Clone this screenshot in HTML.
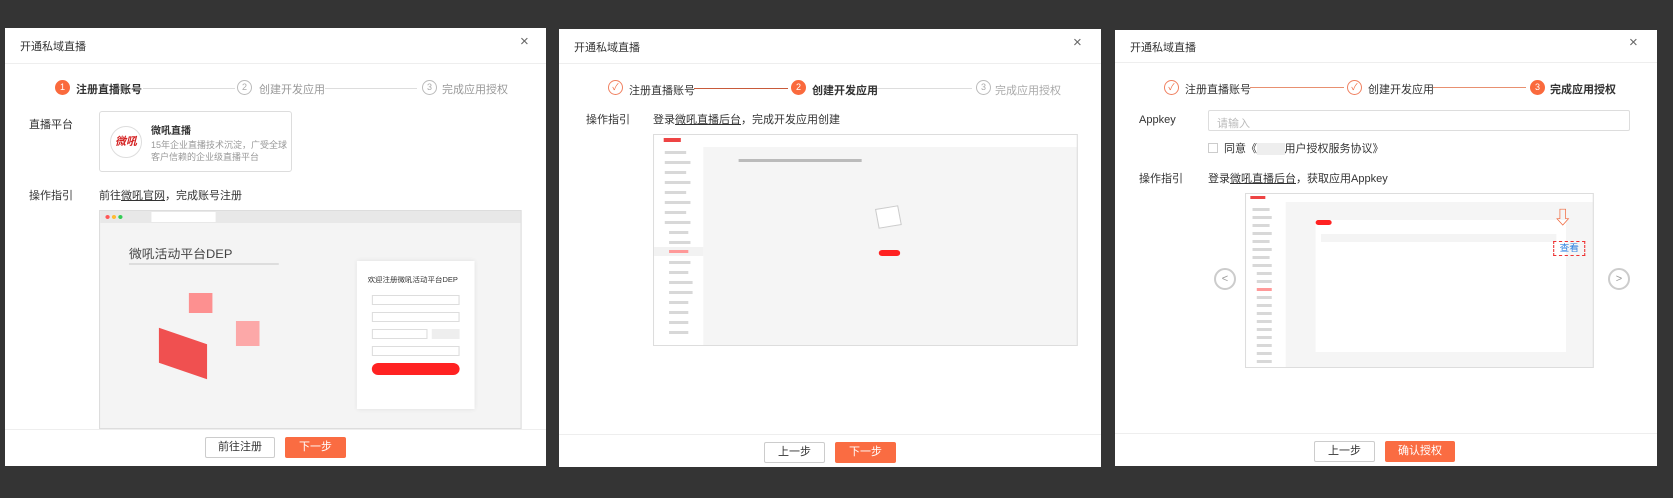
<!DOCTYPE html>
<html><head><meta charset="utf-8"><style>
*{margin:0;padding:0;box-sizing:border-box}
body{width:1673px;height:498px;background:#343434;position:relative;overflow:hidden;font-family:"Liberation Sans","Noto Sans CJK SC",sans-serif;color:#333}
.p{position:absolute;background:#fff}
.a{position:absolute}
.t{font-size:11px;white-space:nowrap}
.hl{position:absolute;left:0;right:0;height:1px;background:#eee}
.x{position:absolute;font-size:15px;color:#666}
.c{position:absolute;width:15px;height:15px;border-radius:50%;font-size:9px;text-align:center;line-height:13px}
.on{background:#fa6a3d;color:#fff;line-height:15px}
.off{border:1px solid #bbb;color:#aaa}
.ok{border:1px solid #f08060;color:#f06a40;line-height:12px}
.ln{position:absolute;height:1px}
.btn{position:absolute;height:21px;font-size:11px;text-align:center;line-height:19px;border-radius:2px}
.b1{border:1px solid #ccc;color:#333;background:#fff}
.b2{background:#fa6c42;color:#fff;line-height:21px}
.g{background:#d8d8d8;position:absolute;height:3px}
.sx{transform-origin:0 0;transform:scaleX(1.07)}
</style></head><body>

<!-- Panel 1 -->
<div class="p" style="left:5px;top:28px;width:541px;height:438px">
 <div class="a t" style="left:15px;top:10px">开通私域直播</div>
 <div class="x" style="left:515px;top:5px">×</div>
 <div class="hl" style="top:35px"></div>
 <div class="c on" style="left:50px;top:52px">1</div>
 <div class="a t" style="left:71px;top:53px;font-weight:bold">注册直播账号</div>
 <div class="ln" style="left:138px;top:60px;width:92px;background:#ddd"></div>
 <div class="c off" style="left:232px;top:52px">2</div>
 <div class="a t" style="left:254px;top:53px;color:#999">创建开发应用</div>
 <div class="ln" style="left:320px;top:60px;width:92px;background:#ddd"></div>
 <div class="c off" style="left:417px;top:52px">3</div>
 <div class="a t" style="left:437px;top:53px;color:#999">完成应用授权</div>
 <div class="a t" style="left:24px;top:88px">直播平台</div>
 <div class="a" style="left:94px;top:83px;width:193px;height:61px;border:1px solid #ddd;border-radius:3px">
  <div class="a" style="left:10px;top:14px;width:32px;height:32px;border:1px solid #ddd;border-radius:50%;color:#d42020;font-size:11px;font-weight:bold;text-align:center;line-height:30px;font-style:italic">微吼</div>
  <div class="a t" style="left:51px;top:10px;font-weight:bold;font-size:10px">微吼直播</div>
  <div class="a" style="left:51px;top:27px;font-size:9px;color:#999;line-height:12px;width:138px">15年企业直播技术沉淀，广受全球客户信赖的企业级直播平台</div>
 </div>
 <div class="a t" style="left:24px;top:159px">操作指引</div>
 <div class="a t" style="left:94px;top:159px">前往<u>微吼官网</u>，完成账号注册</div>
 <div class="a sx" style="left:94px;top:182px;width:395px;height:219px;border:1px solid #ddd;background:#f4f4f4;overflow:hidden">
  <div class="a" style="left:0;top:0;width:100%;height:12px;background:#e8e8e8"></div>
  <div class="a" style="left:5px;top:4px;width:4px;height:4px;border-radius:50%;background:#f55"></div>
  <div class="a" style="left:11px;top:4px;width:4px;height:4px;border-radius:50%;background:#fb3"></div>
  <div class="a" style="left:17px;top:4px;width:4px;height:4px;border-radius:50%;background:#3c5"></div>
  <div class="a" style="left:48px;top:1px;width:60px;height:10px;background:#fff"></div>
  <div class="a t" style="left:27px;top:34px;font-size:12px;color:#444">微吼活动平台DEP</div>
  <div class="a" style="left:27px;top:52px;width:140px;height:2px;background:#ddd"></div>
  <div class="a" style="left:55px;top:125px;width:45px;height:35px;background:#e33;opacity:.85;transform:skewY(20deg)"></div>
  <div class="a" style="left:83px;top:82px;width:22px;height:20px;background:#f77;opacity:.8"></div>
  <div class="a" style="left:127px;top:110px;width:22px;height:25px;background:#f88;opacity:.7"></div>
  <div class="a" style="left:240px;top:50px;width:110px;height:148px;background:#fff;box-shadow:0 0 4px #ddd">
   <div class="a t" style="left:10px;top:14px;font-size:7px;color:#333">欢迎注册微吼活动平台DEP</div>
   <div class="a" style="left:14px;top:34px;width:82px;height:10px;border:1px solid #ddd"></div>
   <div class="a" style="left:14px;top:51px;width:82px;height:10px;border:1px solid #ddd"></div>
   <div class="a" style="left:14px;top:68px;width:52px;height:10px;border:1px solid #ddd"></div>
   <div class="a" style="left:70px;top:68px;width:26px;height:10px;background:#eee"></div>
   <div class="a" style="left:14px;top:85px;width:82px;height:10px;border:1px solid #ddd"></div>
   <div class="a" style="left:14px;top:102px;width:82px;height:12px;border-radius:6px;background:#f22"></div>
  </div>
 </div>
 <div class="hl" style="top:401px"></div>
 <div class="btn b1" style="left:200px;top:409px;width:70px">前往注册</div>
 <div class="btn b2" style="left:280px;top:409px;width:61px">下一步</div>
</div>

<!-- Panel 2 -->
<div class="p" style="left:559px;top:29px;width:542px;height:438px">
 <div class="a t" style="left:15px;top:10px">开通私域直播</div>
 <div class="x" style="left:514px;top:5px">×</div>
 <div class="hl" style="top:34px"></div>
 <div class="c ok" style="left:49px;top:51px">✓</div>
 <div class="a t" style="left:70px;top:53px">注册直播账号</div>
 <div class="ln" style="left:135px;top:59px;width:94px;background:#c85a3a"></div>
 <div class="c on" style="left:232px;top:51px">2</div>
 <div class="a t" style="left:253px;top:53px;font-weight:bold">创建开发应用</div>
 <div class="ln" style="left:318px;top:59px;width:95px;background:#ddd"></div>
 <div class="c off" style="left:417px;top:51px">3</div>
 <div class="a t" style="left:436px;top:53px;color:#aaa">完成应用授权</div>
 <div class="a t" style="left:27px;top:82px">操作指引</div>
 <div class="a t" style="left:94px;top:82px">登录<u>微吼直播后台</u>，完成开发应用创建</div>
 <div class="a sx" style="left:94px;top:105px;width:397px;height:212px;border:1px solid #ddd;background:#f5f5f5;overflow:hidden">
  <div class="a" style="left:0;top:0;width:100%;height:12px;background:#fff"></div>
  <div class="a" style="left:9px;top:3px;width:16px;height:4px;background:#e44"></div>
  <div class="a" style="left:0;top:12px;width:46px;height:200px;background:#fff"></div>
  <div class="g" style="left:10px;top:16px;width:20px"></div><div class="g" style="left:10px;top:26px;width:24px"></div><div class="g" style="left:10px;top:36px;width:20px"></div><div class="g" style="left:10px;top:46px;width:24px"></div><div class="g" style="left:10px;top:56px;width:20px"></div><div class="g" style="left:10px;top:66px;width:24px"></div><div class="g" style="left:10px;top:76px;width:20px"></div><div class="g" style="left:10px;top:86px;width:24px"></div><div class="g" style="left:14px;top:96px;width:18px"></div><div class="g" style="left:14px;top:106px;width:20px"></div>
  <div class="a" style="left:0;top:112px;width:46px;height:9px;background:#f2f2f2"></div>
  <div class="g" style="left:14px;top:115px;width:18px;background:#f99"></div>
  <div class="g" style="left:14px;top:126px;width:20px"></div><div class="g" style="left:14px;top:136px;width:18px"></div><div class="g" style="left:14px;top:146px;width:22px"></div><div class="g" style="left:14px;top:156px;width:22px"></div><div class="g" style="left:14px;top:166px;width:18px"></div><div class="g" style="left:14px;top:176px;width:18px"></div><div class="g" style="left:14px;top:186px;width:18px"></div><div class="g" style="left:14px;top:196px;width:18px"></div>
  <div class="a" style="left:79px;top:24px;width:115px;height:3px;background:#bbb"></div>
  <div class="a" style="left:208px;top:72px;width:22px;height:20px;border:1px solid #ccc;background:#fff;transform:rotate(-10deg)"></div>
  <div class="a" style="left:210px;top:115px;width:20px;height:6px;border-radius:3px;background:#f22"></div>
 </div>
 <div class="hl" style="top:405px"></div>
 <div class="btn b1" style="left:205px;top:413px;width:61px">上一步</div>
 <div class="btn b2" style="left:276px;top:413px;width:61px">下一步</div>
</div>

<!-- Panel 3 -->
<div class="p" style="left:1115px;top:30px;width:542px;height:436px">
 <div class="a t" style="left:15px;top:9px">开通私域直播</div>
 <div class="x" style="left:514px;top:4px">×</div>
 <div class="hl" style="top:32px"></div>
 <div class="c ok" style="left:49px;top:50px">✓</div>
 <div class="a t" style="left:70px;top:51px">注册直播账号</div>
 <div class="ln" style="left:135px;top:57px;width:94px;background:#e89070"></div>
 <div class="c ok" style="left:232px;top:50px">✓</div>
 <div class="a t" style="left:253px;top:51px">创建开发应用</div>
 <div class="ln" style="left:318px;top:57px;width:93px;background:#e89070"></div>
 <div class="c on" style="left:415px;top:50px">3</div>
 <div class="a t" style="left:435px;top:51px;font-weight:bold">完成应用授权</div>
 <div class="a t" style="left:24px;top:84px">Appkey</div>
 <div class="a" style="left:93px;top:80px;width:422px;height:21px;border:1px solid #ddd;border-radius:2px"><span class="a t" style="left:8px;top:4px;color:#bbb">请输入</span></div>
 <div class="a" style="left:93px;top:113px;width:10px;height:10px;border:1px solid #ccc"></div>
 <div class="a t" style="left:109px;top:110px">同意《<span style="background:#eee;color:#eee">xxxxx</span>用户授权服务协议》</div>
 <div class="a t" style="left:24px;top:140px">操作指引</div>
 <div class="a t" style="left:93px;top:140px">登录<u>微吼直播后台</u>，获取应用Appkey</div>
 <div class="a sx" style="left:130px;top:163px;width:326px;height:175px;border:1px solid #ddd;background:#f5f5f5;overflow:hidden">
  <div class="a" style="left:0;top:0;width:100%;height:8px;background:#fff"></div>
  <div class="a" style="left:4px;top:2px;width:14px;height:3px;background:#e44"></div>
  <div class="a" style="left:0;top:8px;width:37px;height:170px;background:#fff"></div>
  <div class="g" style="left:6px;top:14px;width:16px"></div><div class="g" style="left:6px;top:22px;width:18px"></div><div class="g" style="left:6px;top:30px;width:16px"></div><div class="g" style="left:6px;top:38px;width:18px"></div><div class="g" style="left:6px;top:46px;width:16px"></div><div class="g" style="left:6px;top:54px;width:18px"></div><div class="g" style="left:6px;top:62px;width:16px"></div><div class="g" style="left:6px;top:70px;width:18px"></div><div class="g" style="left:10px;top:78px;width:14px"></div><div class="g" style="left:10px;top:86px;width:14px"></div><div class="g" style="left:10px;top:94px;width:14px;background:#f99"></div><div class="g" style="left:10px;top:102px;width:14px"></div><div class="g" style="left:10px;top:110px;width:14px"></div><div class="g" style="left:10px;top:118px;width:14px"></div><div class="g" style="left:10px;top:126px;width:14px"></div><div class="g" style="left:10px;top:134px;width:14px"></div><div class="g" style="left:10px;top:142px;width:14px"></div><div class="g" style="left:10px;top:150px;width:14px"></div><div class="g" style="left:10px;top:158px;width:14px"></div><div class="g" style="left:10px;top:166px;width:14px"></div>
  <div class="a" style="left:65px;top:26px;width:234px;height:132px;background:#fff"></div>
  <div class="a" style="left:65px;top:26px;width:15px;height:5px;border-radius:3px;background:#f22"></div>
  <div class="a" style="left:70px;top:40px;width:220px;height:8px;background:#f4f4f4"></div>
  <div class="a" style="left:287px;top:12px;width:12px;height:24px;color:#f06a40;font-size:18px;line-height:24px">⇩</div>
  <div class="a" style="left:287px;top:47px;width:30px;height:15px;border:1px dashed #e33;color:#2a7fe0;font-size:9px;text-align:center;line-height:13px">查看</div>
 </div>
 <div class="a" style="left:99px;top:238px;width:22px;height:22px;border:2px solid #ccc;border-radius:50%;color:#999;font-size:11px;text-align:center;line-height:18px">&lt;</div>
 <div class="a" style="left:493px;top:238px;width:22px;height:22px;border:2px solid #ccc;border-radius:50%;color:#999;font-size:11px;text-align:center;line-height:18px">&gt;</div>
 <div class="hl" style="top:403px"></div>
 <div class="btn b1" style="left:199px;top:411px;width:61px">上一步</div>
 <div class="btn b2" style="left:270px;top:411px;width:70px">确认授权</div>
</div>
</body></html>
